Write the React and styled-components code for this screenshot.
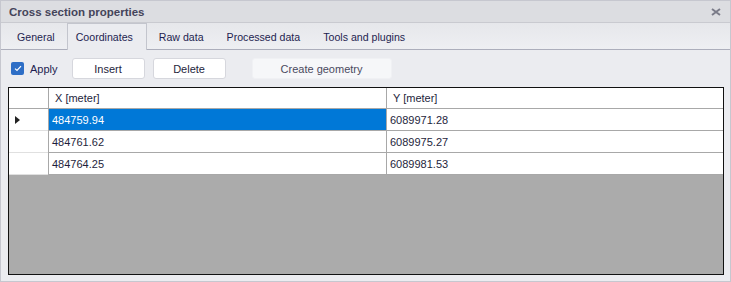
import React from "react";
import styled, { createGlobalStyle } from "styled-components";

const Global = createGlobalStyle`
  html, body {
    margin: 0;
    padding: 0;
    background: #ebecf0;
  }
  body {
    font-family: "Liberation Sans", Arial, sans-serif;
    font-size: 11px;
    color: #1e1e3c;
  }
`;

const tabs = ["General", "Coordinates", "Raw data", "Processed data", "Tools and plugins"];

const rows = [
  ["484759.94", "6089971.28"],
  ["484761.62", "6089975.27"],
  ["484764.25", "6089981.53"],
];

const App = () => {
  return (
    <Window>
      <Global />
      <TitleBar>
        <Title>Cross section properties</Title>
        <CloseIcon viewBox="0 0 10 8">
          <path d="M1 1 L9 7 M9 1 L1 7" stroke="#7a7b88" strokeWidth="2" />
        </CloseIcon>
      </TitleBar>

      <TabStrip>
        {tabs.map((t) => (
          <Tab key={t} $active={t === "Coordinates"}>
            {t}
          </Tab>
        ))}
      </TabStrip>

      <Toolbar>
        <CheckLabel>
          <Checkbox>
            <svg width="8" height="7" viewBox="0 0 8 7">
              <path d="M1 3.6 L3 5.5 L7 1.2" stroke="#fff" strokeWidth="1.2" fill="none" />
            </svg>
          </Checkbox>
          Apply
        </CheckLabel>
        <Button $w={73}>Insert</Button>
        <Button $w={73}>Delete</Button>
        <Button $w={140} $disabled $gap={18}>
          Create geometry
        </Button>
      </Toolbar>

      <Grid>
        <Row $header>
          <RowHead $header />
          <Cell $w={338} $header>X [meter]</Cell>
          <Cell $header $last>Y [meter]</Cell>
        </Row>
        {rows.map((r, i) => (
          <Row key={i}>
            <RowHead>{i === 0 && <Marker />}</RowHead>
            <Cell $w={338} $selected={i === 0}>
              {r[0]}
            </Cell>
            <Cell $last>{r[1]}</Cell>
          </Row>
        ))}
        <Empty />
      </Grid>
    </Window>
  );
};

const Window = styled.div`
  box-sizing: border-box;
  width: 731px;
  height: 282px;
  border: 1px solid #c6c7cf;
  background: #ebecf0;
  display: flex;
  flex-direction: column;
`;

const TitleBar = styled.div`
  height: 21px;
  background: #dcdde1;
  border-bottom: 1px solid #c9cad0;
  display: flex;
  align-items: center;
  justify-content: space-between;
  padding: 0 9px 0 8px;
`;

const Title = styled.div`
  font-weight: bold;
  font-size: 11.5px;
  color: #44445a;
`;

const CloseIcon = styled.svg`
  width: 10px;
  height: 8px;
`;

const TabStrip = styled.div`
  height: 26px;
  display: flex;
  align-items: stretch;
  padding-left: 5px;
  background: linear-gradient(to bottom, #e6e7eb, #eeeff2);
  border-bottom: 1px solid #acaebb;
`;

const Tab = styled.div`
  display: flex;
  align-items: center;
  padding: 0 ${(p) => (p.$active ? "13px 0 8px" : "10px")};
  margin-right: 1px;
  color: #1e1e50;
  font-size: 10.6px;
  background: ${(p) => (p.$active ? "#ebecf0" : "transparent")};
  border: 1px solid ${(p) => (p.$active ? "#c3c5cd" : "transparent")};
  border-bottom: none;
  margin-bottom: ${(p) => (p.$active ? "-1px" : "0")};
`;

const Toolbar = styled.div`
  height: 37px;
  display: flex;
  align-items: center;
  padding-left: 10px;
`;

const CheckLabel = styled.div`
  display: flex;
  align-items: center;
  gap: 6px;
  color: #1e1e50;
  margin-right: 14px;
`;

const Checkbox = styled.div`
  width: 13px;
  height: 13px;
  border-radius: 2px;
  background: #2d6ec6;
  display: flex;
  align-items: center;
  justify-content: center;
`;

const Button = styled.div`
  box-sizing: border-box;
  width: ${(p) => p.$w}px;
  height: 21px;
  margin-right: ${(p) => (p.$gap ? 0 : 8)}px;
  margin-left: ${(p) => p.$gap || 0}px;
  display: flex;
  align-items: center;
  justify-content: center;
  border-radius: 3px;
  background: ${(p) => (p.$disabled ? "#f6f7f9" : "#ffffff")};
  border: 1px solid ${(p) => (p.$disabled ? "#f0f1f4" : "#d6d7dd")};
  color: ${(p) => (p.$disabled ? "#4a4a60" : "#1e1e3c")};
`;

const Grid = styled.div`
  flex: 1;
  margin: 0 6px 6px 7px;
  border: 1px solid #111;
  display: flex;
  flex-direction: column;
  background: #ababab;
`;

const Row = styled.div`
  display: flex;
  height: ${(p) => (p.$header ? 20 : 21)}px;
  background: #fff;
  border-bottom: 1px solid #a8a8a8;
`;

const RowHead = styled.div`
  box-sizing: border-box;
  width: 40px;
  flex: none;
  border-right: 1px solid #a8a8a8;
  display: flex;
  align-items: center;
  padding-left: 6px;
  box-shadow: ${(p) => (p.$header ? "none" : "inset 0 -1px 0 #e0e0e0")};
  margin-bottom: ${(p) => (p.$header ? 0 : -1)}px;
  height: ${(p) => (p.$header ? "auto" : "22px")};
  background: #fff;
`;

const Marker = styled.div`
  width: 0;
  height: 0;
  border-top: 4px solid transparent;
  border-bottom: 4px solid transparent;
  border-left: 5px solid #222;
`;

const Cell = styled.div`
  box-sizing: border-box;
  width: ${(p) => (p.$w ? `${p.$w}px` : "auto")};
  flex: ${(p) => (p.$w ? "none" : "1")};
  border-right: ${(p) => (p.$last ? "none" : "1px solid #a8a8a8")};
  display: flex;
  align-items: center;
  padding-left: ${(p) => (p.$header ? 6 : 3)}px;
  background: ${(p) => (p.$selected ? "#0078d7" : "#fff")};
  color: ${(p) => (p.$selected ? "#fff" : "#1e1e3c")};
`;

const Empty = styled.div`
  flex: 1;
  background: #ababab;
`;

export default App;
